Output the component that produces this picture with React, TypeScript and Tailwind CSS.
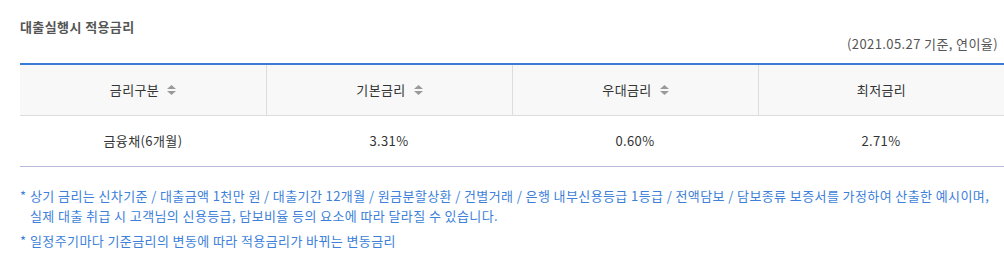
import React from "react";

type Col = { label: string; sort: boolean };

const COLS: Col[] = [
  { label: "금리구분", sort: true },
  { label: "기본금리", sort: true },
  { label: "우대금리", sort: true },
  { label: "최저금리", sort: false },
];

const ROW = ["금융채(6개월)", "3.31%", "0.60%", "2.71%"];

// 위/아래 정렬 화살표
function SortIcon() {
  return (
    <svg width="9" height="10" viewBox="0 0 9 10" className="ml-[8px] shrink-0">
      <path d="M4.5 0 L9 4 L0 4 Z" fill="#9a9a9a" />
      <path d="M0 6 L9 6 L4.5 10 Z" fill="#9a9a9a" />
    </svg>
  );
}

export default function App() {
  return (
    <main
      className="w-[1004px] h-[260px] overflow-hidden bg-white pl-[20px] pt-[17px] tracking-[0.4px]"
      style={{ fontFamily: '"Noto Sans CJK KR", "Noto Sans", sans-serif' }}
    >
      <h2 className="text-[13px] leading-[19px] font-bold text-[#555]">대출실행시 적용금리</h2>
      <p className="text-right text-[13px] leading-[19px] text-[#555] pr-[6px] mt-[-2px]">
        (2021.05.27 기준, 연이율)
      </p>

      {/* TABLE */}
      <div className="mt-[10px] border-t-2 border-[#3a7bd5]">
        <div className="grid grid-cols-4 h-[51px] bg-[#f8f8f8] border-b border-[#dddddd]">
          {COLS.map((c, i) => (
            <div
              key={c.label}
              className={`flex items-center justify-center text-[13px] text-[#333] ${i > 0 ? "border-l border-[#dddddd]" : ""}`}
            >
              <span>{c.label}</span>
              {c.sort && <SortIcon />}
            </div>
          ))}
        </div>
        <div className="grid grid-cols-4 h-[51px] border-b border-[#b7b9d8]">
          {ROW.map((v) => (
            <div key={v} className="flex items-center justify-center text-[13px] text-[#333]">
              {v}
            </div>
          ))}
        </div>
      </div>

      {/* NOTES */}
      <div className="mt-[19px] text-[13px] leading-[20px] text-[#3d7fd9]">
        <div className="flex">
          <span className="w-[10px] shrink-0">*</span>
          <p>
            상기 금리는 신차기준 / 대출금액 1천만 원 / 대출기간 12개월 / 원금분할상환 / 건별거래 / 은행 내부신용등급 1등급 / 전액담보 / 담보종류 보증서를 가정하여 산출한 예시이며,
            <br />
            실제 대출 취급 시 고객님의 신용등급, 담보비율 등의 요소에 따라 달라질 수 있습니다.
          </p>
        </div>
        <div className="flex mt-[5px]">
          <span className="w-[10px] shrink-0">*</span>
          <p>일정주기마다 기준금리의 변동에 따라 적용금리가 바뀌는 변동금리</p>
        </div>
      </div>
    </main>
  );
}
